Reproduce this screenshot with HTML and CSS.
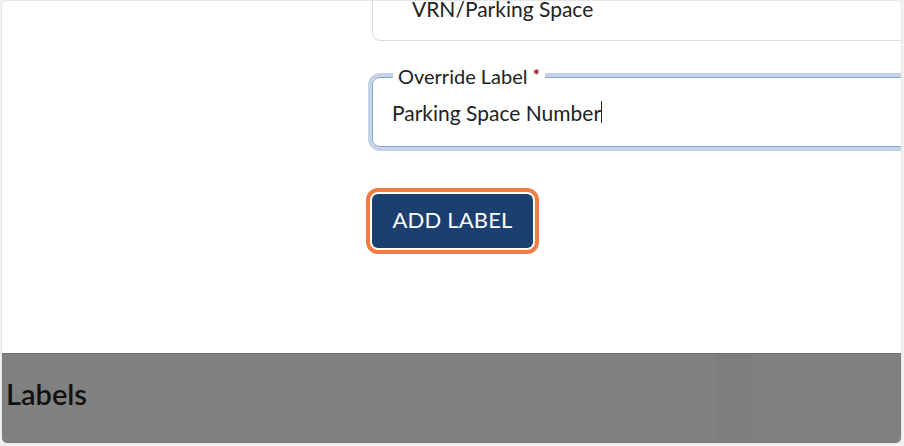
FILE: index.html
```html
<!DOCTYPE html>
<html>
<head>
<meta charset="utf-8">
<link rel="stylesheet" href="styles.css">
</head>
<body>
<div class="card">
  <div class="form">
    <div class="field-static">VRN/Parking Space</div>
    <div class="field-focus">
      <span class="float-label">Override Label <span class="req">*</span></span>
      <div class="value">Parking Space Number<span class="caret"></span></div>
    </div>
    <button class="btn">ADD LABEL</button>
  </div>
  <div class="labels-bar">
    <h2 class="labels-title">Labels</h2>
    <div class="bar-shade"></div>
  </div>
</div>
</body>
</html>
```
FILE: styles.css
```css
* { box-sizing: border-box; }
html, body { margin: 0; padding: 0; }
body {
  width: 904px;
  height: 446px;
  background: #f2f2f5;
  font-family: Lato, "Open Sans", sans-serif;
  color: #1c1c1c;
  overflow: hidden;
}
.card {
  margin: 0 2px 0 1px;
  height: 444px;
  background: #fff;
  border: 1px solid #e6e6ea;
  border-radius: 6px;
  overflow: hidden;
  display: flex;
  flex-direction: column;
}
.form {
  flex: 1;
  padding-left: 370px;
  margin-right: -12px;
  display: flex;
  flex-direction: column;
  align-items: flex-start;
}
.field-static {
  align-self: stretch;
  height: 56px;
  margin-top: -16px;
  border: 1px solid #dcdce2;
  border-radius: 8px;
  padding: 0 0 10px 39px;
  display: flex;
  align-items: center;
  font-size: 21px;
  color: #222;
}
.field-focus {
  position: relative;
  align-self: stretch;
  margin-top: 36px;
  margin-left: 0;
  height: 70px;
  border: 1px solid #86a3cc;
  border-radius: 8px;
  box-shadow: 0 0 0 4px #c6d3e6;
  display: flex;
  align-items: center;
  padding: 0 0 0 19px;
}
.float-label {
  position: absolute;
  left: 20px;
  top: -12px;
  padding: 0 5px;
  background: #fff;
  font-size: 20px;
  line-height: 20px;
  color: #222;
}
.req { color: #990f0f; font-size: 17px; font-weight: 700; vertical-align: top; }
.value {
  font-size: 21px;
  color: #222;
  display: flex;
  align-items: center;
}
.caret {
  display: inline-block;
  width: 1px;
  height: 22px;
  background: #222;
  margin-left: 0;
}
.btn {
  margin-top: 47px;
  margin-left: 0;
  width: 161px;
  height: 54px;
  border: none;
  border-radius: 6px;
  background: #1b3f6f;
  color: #fff;
  font-family: Lato, "Open Sans", sans-serif;
  font-size: 22px;
  letter-spacing: 0.2px;
  outline: 4px solid #f57b45;
  outline-offset: 2px;
  padding: 0 0 3px;
}
.labels-bar {
  position: relative;
  height: 90px;
  background: #808080;
  border-top: 1px solid #6f6f6f;
  padding: 22px 0 0 4px;
}
.labels-title {
  margin: 0;
  font-size: 29px;
  font-weight: 600;
  line-height: 36px;
  color: #111;
}
.bar-shade {
  position: absolute;
  left: 715px;
  top: 0;
  width: 36px;
  bottom: 0;
  background: rgba(0,0,0,0.02);
}
```
